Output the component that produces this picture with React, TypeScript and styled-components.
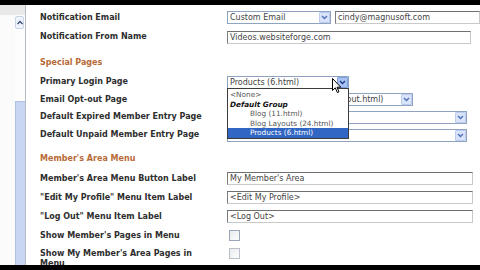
import React from "react";
import styled, { createGlobalStyle } from "styled-components";

// Members area settings form, shown inside a letterboxed frame

const GlobalStyle = createGlobalStyle`
	html, body {
		margin: 0;
		padding: 0;
		background: #000;
	}
	body {
		width: 480px;
		height: 270px;
		overflow: hidden;
		font-family: "DejaVu Sans", Verdana, sans-serif;
	}
`;

const Screen = styled.div`
	width: 480px;
	height: 270px;
	display: flex;
	flex-direction: column;
	background: #000;
`;

const Letterbox = styled.div<{ $h: number }>`
	height: ${({ $h }) => $h}px;
	flex-shrink: 0;
	background: #000;
`;

const Frame = styled.div`
	flex: 1;
	display: flex;
	background: #fff;
	overflow: hidden;
	position: relative;
`;

const Sidebar = styled.div`
	width: 25px;
	flex-shrink: 0;
	display: flex;
	flex-direction: column;
	background: #fbfbfb;
	border-right: 1px solid #b4bac4;
`;

const SidebarStrip = styled.div`
	height: 10px;
	background: #e9e9e9;
`;

const SidebarBody = styled.div`
	flex: 1;
	display: flex;
	justify-content: flex-end;
`;

const ScrollBar = styled.div`
	width: 10px;
	display: flex;
	flex-direction: column;
	background: #fdfdfd;
`;

const ScrollButton = styled.div`
	height: 11px;
	margin: 1px 1px 0 0;
	display: flex;
	align-items: center;
	justify-content: center;
	background: #eef3fc;
	border: 1px solid #c9d3e6;
	border-radius: 2px;
`;

const ScrollTrack = styled.div`
	height: 72px;
`;

const ScrollThumb = styled.div`
	flex: 1;
	background: #c8d6f3;
	border-left: 1px solid #b0c1e6;
	border-top: 1px solid #b0c1e6;
`;

const Content = styled.div`
	flex: 1;
	padding: 3px 0 0 14px;
	display: flex;
	flex-direction: column;
`;

const Row = styled.div<{ $h: number }>`
	height: ${({ $h }) => $h}px;
	flex-shrink: 0;
	display: grid;
	grid-template-columns: 187px 1fr;
	align-items: center;
`;

const Heading = styled.div<{ $h: number; $pad: number }>`
	height: ${({ $h }) => $h}px;
	flex-shrink: 0;
	padding-top: ${({ $pad }) => $pad}px;
	box-sizing: border-box;
	line-height: 20px;
	font-size: 8px;
	font-weight: bold;
	color: #b86a36;
`;

const Label = styled.div<{ $wrap?: boolean }>`
	font-size: 8px;
	font-weight: bold;
	color: #2e2e2e;
	white-space: ${({ $wrap }) => ($wrap ? "normal" : "nowrap")};
	max-width: 178px;
	line-height: 10px;
	align-self: ${({ $wrap }) => ($wrap ? "start" : "center")};
	padding-top: ${({ $wrap }) => ($wrap ? "4px" : "0")};
`;

const Controls = styled.div<{ $top?: boolean }>`
	display: flex;
	align-items: center;
	gap: 4px;
	min-width: 0;
	align-self: ${({ $top }) => ($top ? "start" : "center")};
	padding-top: ${({ $top }) => ($top ? "3px" : "0")};
`;

const SelectBox = styled.div<{ $w: number }>`
	width: ${({ $w }) => $w}px;
	height: 13px;
	box-sizing: border-box;
	flex-shrink: 0;
	display: flex;
	align-items: center;
	border: 1px solid #8ea3c0;
	background: #fff;
	overflow: hidden;
`;

const SelectText = styled.span`
	flex: 1;
	padding-left: 2px;
	font-size: 8px;
	color: #444;
	white-space: nowrap;
	overflow: hidden;
`;

const ArrowButton = styled.div<{ $hover?: boolean }>`
	width: 11px;
	height: 11px;
	box-sizing: border-box;
	flex-shrink: 0;
	display: flex;
	align-items: center;
	justify-content: center;
	background: ${({ $hover }) => ($hover ? "#a9c2f4" : "#d9e4fb")};
	border: 1px solid ${({ $hover }) => ($hover ? "#7f9fe0" : "#bccbee")};
	border-radius: 1px;
`;

const TextInput = styled.div<{ $w?: number }>`
	${({ $w }) => ($w ? `width: ${$w}px;` : "flex: 1;")}
	height: 13px;
	box-sizing: border-box;
	display: flex;
	align-items: center;
	padding-left: 2px;
	border: 1px solid #c9c9c9;
	border-top-color: #6f6f6f;
	border-left-color: #7c7c7c;
	background: #fff;
	font-size: 8px;
	color: #444;
	white-space: nowrap;
	overflow: hidden;
`;

const Check = styled.div<{ $dim?: boolean }>`
	width: 11px;
	height: 11px;
	margin-left: 2px;
	box-sizing: border-box;
	border: 1px solid ${({ $dim }) => ($dim ? "#b9c0ca" : "#9aa7b8")};
	background: linear-gradient(135deg, #e9ebee, #fdfdfd);
`;

const DropList = styled.div`
	position: absolute;
	left: 227px;
	top: 83px;
	width: 122px;
	box-sizing: border-box;
	border: 1px solid #3b3b3b;
	background: #fff;
	padding-top: 1px;
	z-index: 2;
`;

const DropItem = styled.div<{ $indent?: boolean; $group?: boolean; $selected?: boolean }>`
	height: 9.5px;
	line-height: 9.5px;
	padding-left: ${({ $indent }) => ($indent ? "22px" : "2px")};
	font-size: 7.3px;
	white-space: nowrap;
	font-weight: ${({ $group }) => ($group ? "bold" : "normal")};
	font-style: ${({ $group }) => ($group ? "italic" : "normal")};
	color: ${({ $selected, $group }) => ($selected ? "#fff" : $group ? "#111" : "#555")};
	background: ${({ $selected }) => ($selected ? "#3166c4" : "transparent")};
`;

const Cursor = styled.svg`
	position: absolute;
	left: 332px;
	top: 73px;
	z-index: 3;
`;

const Chevron = ({ color = "#4d6fb8" }: { color?: string }) => (
	<svg width="7" height="5" viewBox="0 0 7 5">
		<path d="M1 1 L3.5 3.5 L6 1" fill="none" stroke={color} strokeWidth="1.4" />
	</svg>
);

const Select = ({ width, text, hover }: { width: number; text: string; hover?: boolean }) => (
	<SelectBox $w={width}>
		<SelectText>{text}</SelectText>
		<ArrowButton $hover={hover}>
			<Chevron color={hover ? "#1f3f88" : "#4d6fb8"} />
		</ArrowButton>
	</SelectBox>
);

const App = () => {
	return (
		<>
			<GlobalStyle />
			<Screen>
				<Letterbox $h={5} />
				<Frame>
					<Sidebar>
						<SidebarStrip />
						<SidebarBody>
							<ScrollBar>
								<ScrollButton>
									<svg width="6" height="5" viewBox="0 0 6 5">
										<path d="M0.5 4 L3 1.5 L5.5 4" fill="none" stroke="#3c4f73" strokeWidth="1.4" />
									</svg>
								</ScrollButton>
								<ScrollTrack />
								<ScrollThumb />
							</ScrollBar>
						</SidebarBody>
					</Sidebar>

					<Content>
						<Row $h={19}>
							<Label>Notification Email</Label>
							<Controls>
								<Select width={104} text="Custom Email" />
								<TextInput>cindy@magnusoft.com</TextInput>
							</Controls>
						</Row>
						<Row $h={20}>
							<Label>Notification From Name</Label>
							<Controls>
								<TextInput $w={244}>Videos.websiteforge.com</TextInput>
							</Controls>
						</Row>

						<Heading $h={26} $pad={6}>Special Pages</Heading>
						<Row $h={18}>
							<Label>Primary Login Page</Label>
							<Controls>
								<Select width={122} text="Products (6.html)" hover />
							</Controls>
						</Row>
						<Row $h={17}>
							<Label>Email Opt-out Page</Label>
							<Controls>
								<Select width={186} text="Email Opt-Out (12.email-opt-out.html)" />
							</Controls>
						</Row>
						<Row $h={18}>
							<Label>Default Expired Member Entry Page</Label>
							<Controls>
								<Select width={240} text="Renew (8.html)" />
							</Controls>
						</Row>
						<Row $h={18}>
							<Label>Default Unpaid Member Entry Page</Label>
							<Controls>
								<Select width={240} text="Contact-Us (5.html)" />
							</Controls>
						</Row>

						<Heading $h={25} $pad={5}>Member's Area Menu</Heading>
						<Row $h={19}>
							<Label>Member's Area Menu Button Label</Label>
							<Controls>
								<TextInput $w={246}>My Member's Area</TextInput>
							</Controls>
						</Row>
						<Row $h={19}>
							<Label>"Edit My Profile" Menu Item Label</Label>
							<Controls>
								<TextInput $w={246}>&lt;Edit My Profile&gt;</TextInput>
							</Controls>
						</Row>
						<Row $h={19}>
							<Label>"Log Out" Menu Item Label</Label>
							<Controls>
								<TextInput $w={246}>&lt;Log Out&gt;</TextInput>
							</Controls>
						</Row>
						<Row $h={19}>
							<Label>Show Member's Pages in Menu</Label>
							<Controls>
								<Check />
							</Controls>
						</Row>
						<Row $h={30}>
							<Label $wrap>Show My Member's Area Pages in Menu</Label>
							<Controls $top>
								<Check $dim />
							</Controls>
						</Row>
					</Content>

					<DropList>
						<DropItem>&lt;None&gt;</DropItem>
						<DropItem $group>Default Group</DropItem>
						<DropItem $indent>Blog (11.html)</DropItem>
						<DropItem $indent>Blog Layouts (24.html)</DropItem>
						<DropItem $indent $selected>Products (6.html)</DropItem>
					</DropList>

					<Cursor width="10" height="16" viewBox="0 0 10 16">
						<path
							d="M0.5 0.5 L0.5 12.5 L3.3 9.8 L5.3 14.5 L7 13.8 L5 9.2 L8.8 9.2 Z"
							fill="#fff"
							stroke="#000"
							strokeWidth="1"
						/>
					</Cursor>
				</Frame>
				<Letterbox $h={5} />
			</Screen>
		</>
	);
};

export default App;
